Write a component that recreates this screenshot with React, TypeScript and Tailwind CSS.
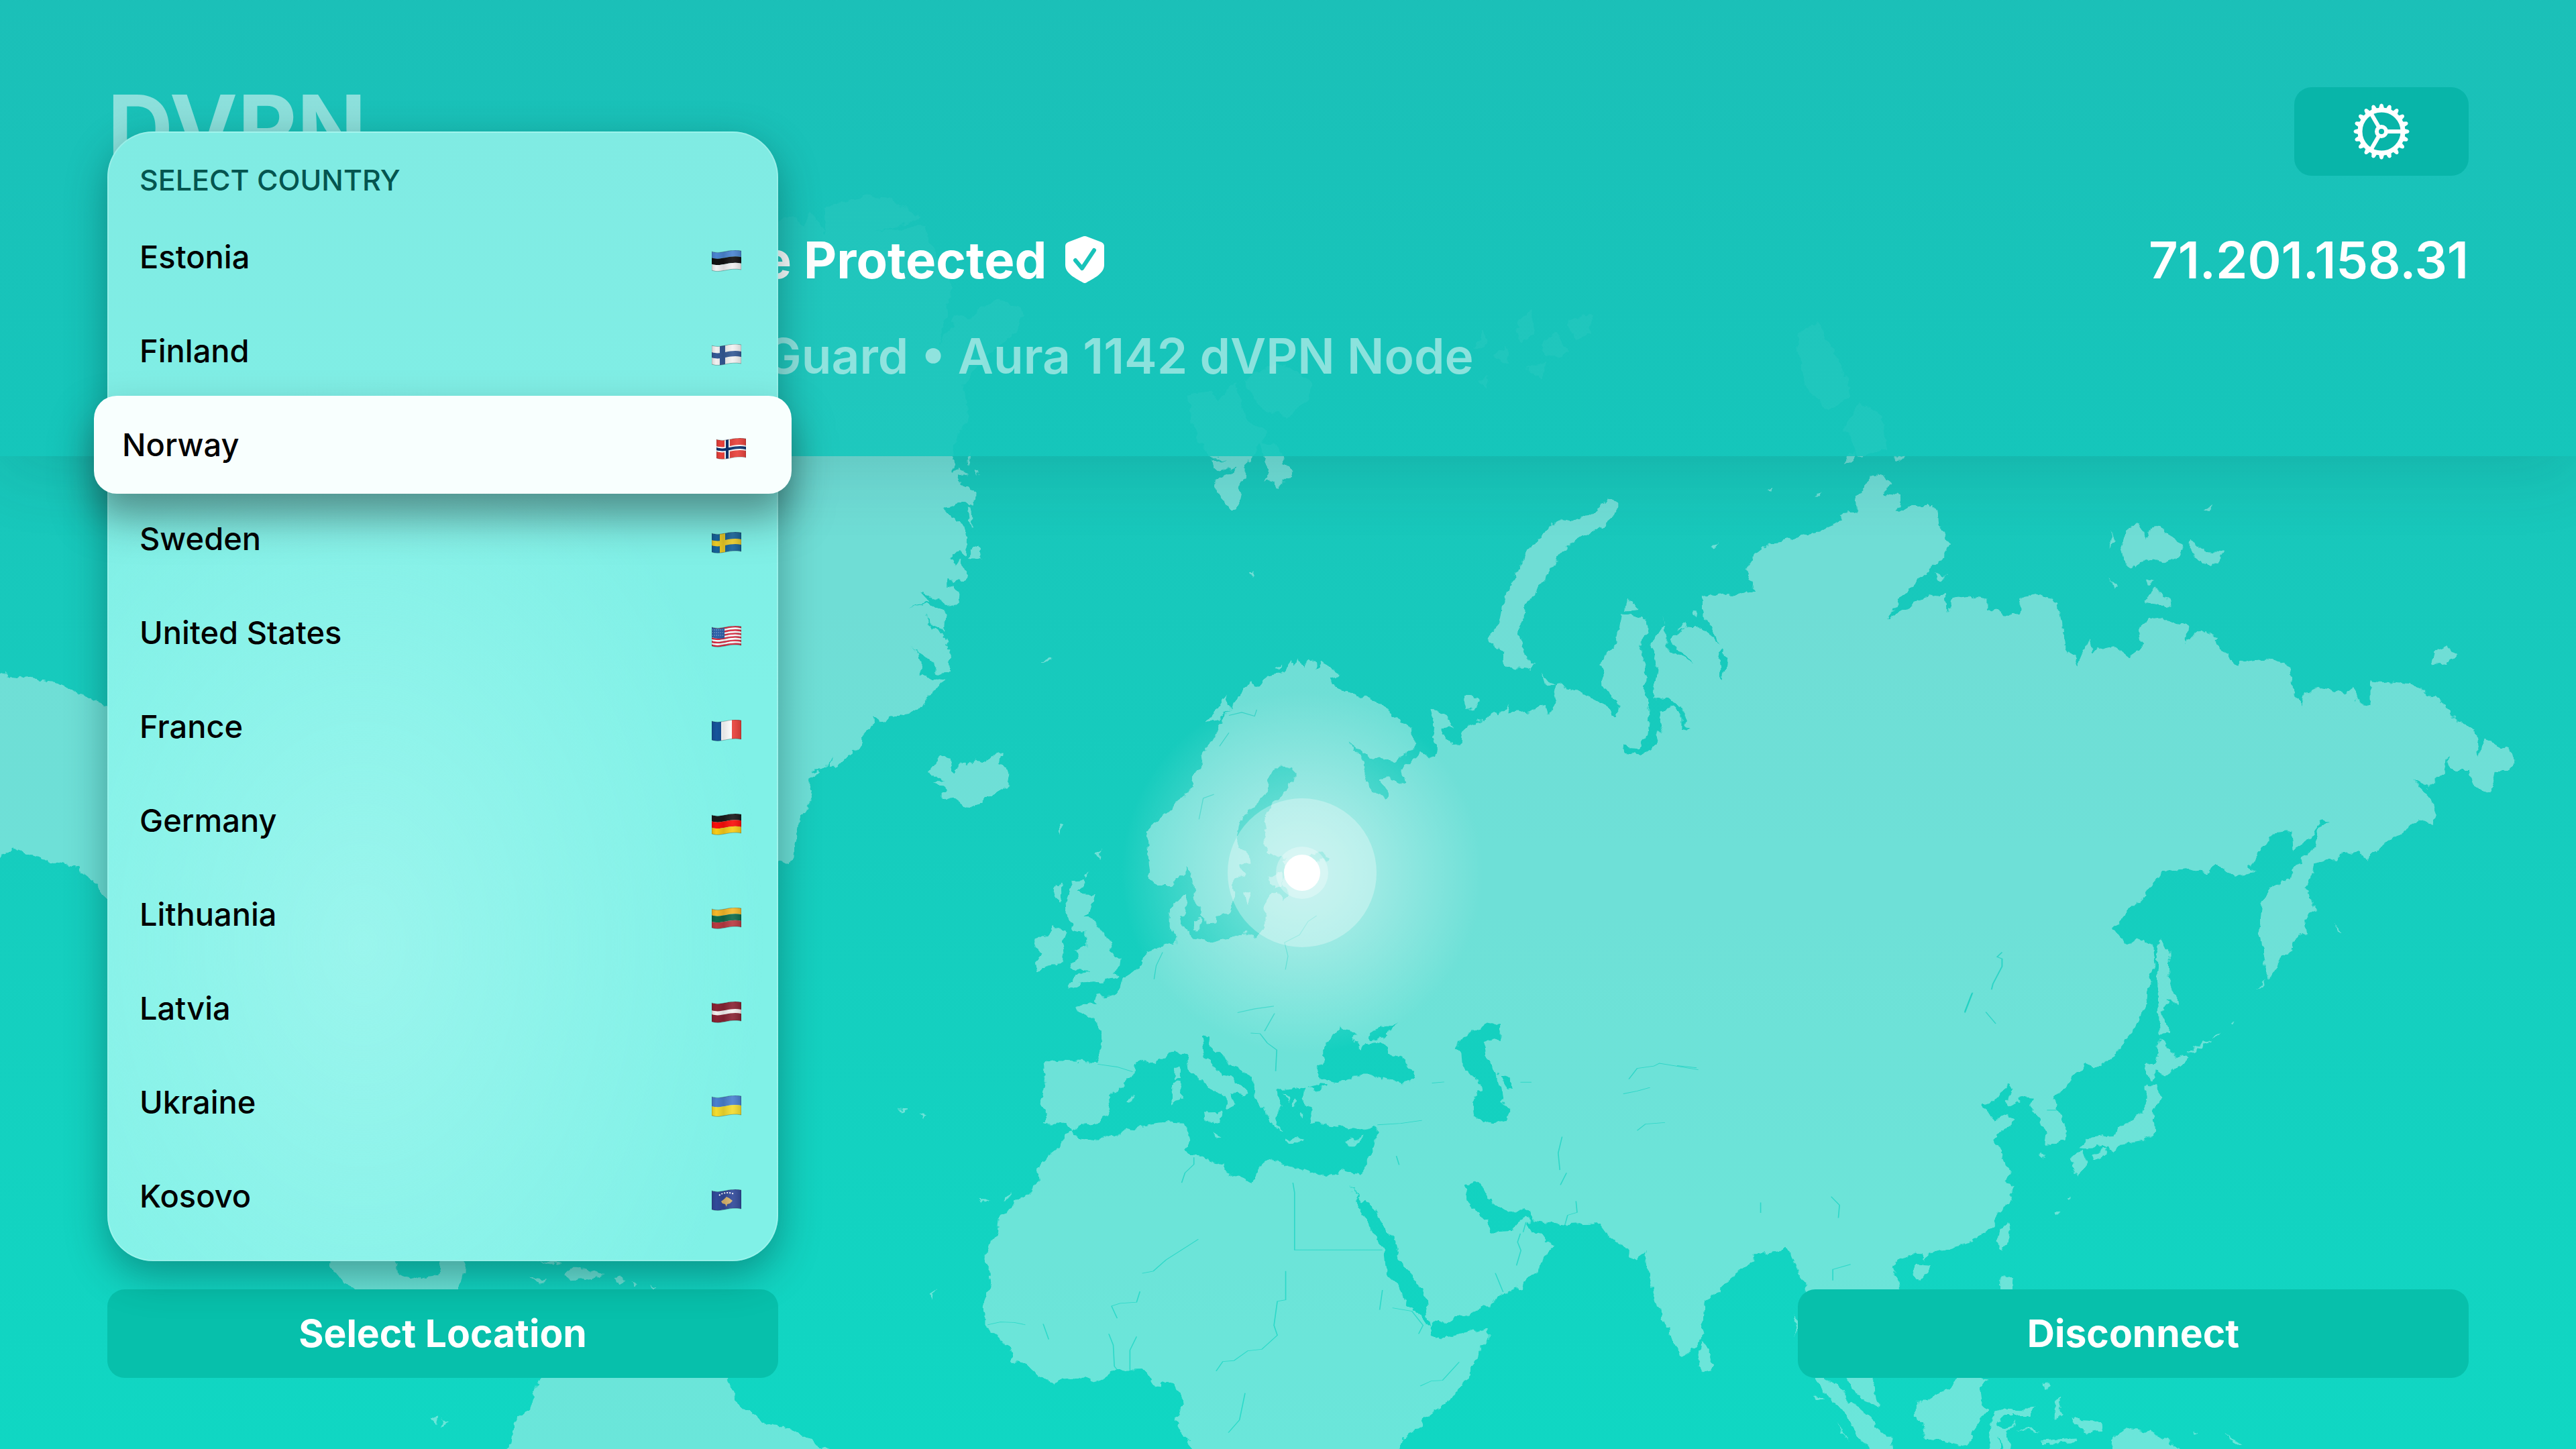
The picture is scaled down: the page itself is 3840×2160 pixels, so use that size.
import type { ReactNode } from "react";
import { clsx } from "clsx";

const band = (from: number, to: number) =>
    `M0 ${from + 2}C14 ${from + 7} 26 ${from - 3} 44 ${from + 1}V${to + 1}C26 ${to - 3} 14 ${to + 7} 0 ${to + 2}Z`;

const stripes = (colors: string[]) =>
    colors.map((fill, i) => (
        <path key={i} d={band((28 / colors.length) * i, (28 / colors.length) * (i + 1))} fill={fill} />
    ));

const cross = (field: string, outer: string, inner?: string) => (
    <>
        <path d={band(0, 28)} fill={field} />
        <path d={band(10, 18)} fill={outer} />
        <path d="M12 0h8v32h-8z" fill={outer} />
        {inner && <path d={band(12, 16)} fill={inner} />}
        {inner && <path d="M14 0h4v32h-4z" fill={inner} />}
    </>
);

const countries: { name: string; flag: ReactNode }[] = [
    { name: "Estonia", flag: stripes(["#4b86d2", "#111111", "#f1f1f1"]) },
    { name: "Finland", flag: cross("#f1f1f1", "#355a96") },
    { name: "Norway", flag: cross("#e8413b", "#ffffff", "#0d3270") },
    { name: "Sweden", flag: cross("#16639c", "#f2d027") },
    {
        name: "United States",
        flag: (
            <>
                {stripes(["#dc2840", "#fff", "#dc2840", "#fff", "#dc2840", "#fff", "#dc2840", "#fff", "#dc2840", "#fff", "#dc2840"])}
                <path d="M0 2C8 5 13 4 19 3V18C13 20 6 19 0 17Z" fill="#2f63ab" />
                <path d="M1 6h17M1 10h17M1 14h17" stroke="#c9dcf3" strokeWidth="1" strokeDasharray="1 2" />
            </>
        ),
    },
    {
        name: "France",
        flag: (
            <>
                <path d="M0 0h15v32H0z" fill="#16549c" />
                <path d="M14 0h16v32H14z" fill="#fdfdfd" />
                <path d="M30 0h14v32H30z" fill="#e8403a" />
            </>
        ),
    },
    { name: "Germany", flag: stripes(["#1a1a1a", "#fb0f0c", "#f8cb17"]) },
    { name: "Lithuania", flag: stripes(["#f5b82a", "#0f6c4c", "#b93a42"]) },
    {
        name: "Latvia",
        flag: (
            <>
                <path d={band(0, 28)} fill="#8a2334" />
                <path d={band(11, 17)} fill="#f4f0f0" />
            </>
        ),
    },
    { name: "Ukraine", flag: stripes(["#4a80cf", "#f4dc2e"]) },
    {
        name: "Kosovo",
        flag: (
            <>
                <path d={band(0, 28)} fill="#314a9a" />
                <path d="m14 18 5-4 3-3 4 2 5 4-4 4-4 1-1 4-2-4-4-1z" fill="#d9b46c" />
                <path d="M11 9c6-5 16-5 22-2" fill="none" stroke="#fff" strokeWidth="2" strokeDasharray="2 2" />
            </>
        ),
    },
];

function Flag({ id, children }: { id: string; children: ReactNode }) {
    return (
        <svg viewBox="0 0 44 32" className="w-11 h-8 mt-3" aria-hidden="true">
            <defs>
                <clipPath id={`${id}-cut`}>
                    <path d={band(0, 28)} />
                </clipPath>
                <linearGradient id={`${id}-fold`}>
                    <stop offset="0" stopColor="#000" stopOpacity="0.12" />
                    <stop offset="0.15" stopColor="#000" stopOpacity="0" />
                    <stop offset="0.4" stopColor="#000" stopOpacity="0.1" />
                    <stop offset="0.7" stopColor="#fff" stopOpacity="0.08" />
                    <stop offset="1" stopColor="#000" stopOpacity="0.14" />
                </linearGradient>
            </defs>
            <g clipPath={`url(#${id}-cut)`}>
                {children}
                <path d="M0 0h44v32H0z" fill={`url(#${id}-fold)`} />
            </g>
            <path d={band(0, 28)} fill="none" stroke="#000" strokeOpacity="0.25" />
        </svg>
    );
}

// Each sheet of the map is drawn on its own 1568-unit grid.
const sheets = {
    europe: "matrix(0.63776 0 0 0.57398 1360 900)",
    siberia: "matrix(1.04592 0 0 0.57398 2200 640)",
    africa: "matrix(0.82908 0 0 0.42092 1400 1500)",
    eastAsia: "matrix(0.82908 0 0 0.54847 2500 1300)",
    americas: "matrix(1.02041 0 0 0.80357 0 900)",
    greenland: "matrix(0.57398 0 0 0.40816 1130 660)",
    arctic: "matrix(0.79082 0 0 0.33333 1040 280)",
};

const land: [keyof typeof sheets, string][] = [
    ["europe", "M230,1568 262,1545 290,1510 295,1500 292,1480 298,1460 318,1434 345,1415 356,1385 360,1374 372,1368 350,1348 310,1347 312,1320 300,1300 306,1280 308,1265 314,1250 306,1225 302,1195 330,1182 350,1186 400,1188 430,1190 435,1180 443,1130 440,1108 425,1085 424,1075 405,1065 385,1058 380,1047 400,1038 432,1040 430,1012 440,1010 445,1020 465,1018 488,1000 492,972 515,962 530,948 543,905 582,895 615,885 615,860 600,838 600,790 620,775 642,752 642,790 630,820 640,850 655,870 680,875 710,880 760,862 775,853 800,865 823,850 825,780 835,755 848,750 870,772 882,760 880,742 862,720 870,700 862,668 880,662 850,660 830,645 822,620 828,580 822,555 835,520 860,505 878,475 893,450 893,430 880,424 848,422 828,460 835,485 805,520 765,560 757,605 762,630 785,655 788,672 765,680 780,700 752,720 748,790 738,805 708,810 705,830 685,832 665,780 652,700 641,685 638,700 600,735 575,735 555,710 552,680 545,590 570,565 605,530 630,505 655,465 672,410 690,370 705,345 722,300 740,275 760,245 775,225 790,200 800,215 830,190 870,180 885,150 895,165 903,140 912,170 925,145 938,142 942,175 955,152 990,175 992,190 970,195 1000,215 1040,240 1080,250 1120,285 1150,310 1168,325 1172,370 1155,395 1130,408 1080,398 1050,385 1018,357 1058,415 1060,460 1085,495 1105,505 1115,490 1090,455 1110,450 1145,472 1155,465 1145,435 1180,400 1190,385 1218,402 1225,375 1215,345 1222,310 1210,278 1240,283 1265,320 1240,325 1238,345 1260,370 1282,360 1285,335 1300,320 1360,285 1370,290 1395,260 1390,295 1410,300 1430,280 1450,285 1480,262 1485,290 1508,270 1500,235 1508,212 1568,228 1568,1568Z"],
    ["siberia", "M0,765 35,740 80,730 95,715 105,745 118,700 112,672 145,675 180,710 197,745 205,710 182,670 180,600 200,555 207,478 240,485 245,500 235,570 242,620 240,700 250,740 245,790 230,830 210,825 215,845 235,850 255,820 265,770 260,730 280,715 292,735 292,780 306,785 297,770 297,725 275,702 252,700 258,620 249,560 268,510 265,480 272,540 272,575 310,603 280,560 278,540 300,513 320,515 352,560 345,620 352,650 358,590 340,530 325,470 325,435 380,425 398,420 385,360 400,320 430,290 490,262 520,240 518,218 545,215 540,180 555,140 573,112 593,140 580,165 608,175 600,215 620,197 650,197 660,210 665,260 675,300 665,335 640,375 610,430 587,490 640,440 670,425 672,480 680,435 700,430 728,440 728,465 750,478 775,480 780,435 795,430 830,450 835,510 838,560 858,612 874,545 880,575 910,562 930,590 948,565 945,510 962,485 1015,512 1010,555 1035,517 1057,545 1065,580 1080,608 1130,595 1160,620 1163,665 1176,720 1180,685 1205,672 1240,685 1250,670 1262,715 1275,718 1275,652 1330,662 1365,695 1390,740 1425,785 1430,845 1438,808 1465,825 1482,860 1470,885 1455,885 1452,910 1447,940 1425,925 1415,885 1390,885 1385,850 1380,895 1358,928 1335,905 1360,960 1368,1000 1365,1025 1343,1010 1300,1070 1275,1105 1272,1120 1260,1098 1235,1105 1228,1122 1210,1118 1198,1130 1185,1190 1197,1250 1182,1275 1185,1310 1165,1320 1163,1355 1148,1370 1130,1427 1125,1390 1117,1300 1122,1230 1130,1200 1158,1165 1180,1110 1200,1080 1203,1030 1215,1020 1205,1012 1195,1055 1165,1092 1163,1045 1135,1050 1115,1100 1102,1140 1110,1150 1080,1160 1055,1130 1040,1148 1010,1140 980,1145 960,1190 930,1250 903,1300 920,1310 925,1345 940,1325 965,1345 968,1390 958,1450 955,1500 932,1568 0,1568Z"],
    ["africa", "M230,450 215,510 190,540 180,580 178,625 155,685 133,695 125,735 110,745 108,785 93,820 80,890 88,930 92,970 87,1030 75,1060 85,1090 85,1130 100,1165 125,1205 133,1255 155,1270 180,1315 207,1343 220,1320 255,1312 280,1327 325,1292 368,1290 385,1343 420,1335 432,1360 435,1410 432,1440 422,1470 435,1520 475,1610 820,1610 840,1520 858,1500 870,1465 920,1390 950,1310 965,1240 985,1185 985,1140 930,1165 900,1180 885,1160 885,1120 905,1122 950,1090 1000,1050 1005,1025 1045,995 1055,965 1075,945 1080,905 1103,850 1085,815 1065,800 1055,770 1065,755 1125,775 1190,770 1205,810 1225,840 1250,897 1270,870 1275,930 1285,1030 1300,1090 1320,1200 1340,1240 1360,1200 1370,1180 1375,1040 1400,1015 1410,985 1440,935 1465,900 1465,870 1525,850 1540,930 1562,1005 1568,1005 1568,0 1140,0 1140,400Z"],
    ["eastAsia", "M-200,0 870,0 845,55 820,95 780,155 795,165 798,200 820,200 835,180 858,215 858,260 848,300 842,370 820,430 780,505 752,533 735,525 705,560 700,590 675,610 685,650 700,690 698,730 660,748 662,710 655,660 637,650 640,612 625,610 598,635 592,625 605,590 595,580 580,600 565,625 547,630 548,645 570,672 585,660 612,675 585,705 567,732 582,750 590,790 603,815 588,840 605,855 598,890 575,930 570,955 550,985 530,1008 490,1020 450,1037 447,1060 440,1040 415,1037 390,1065 388,1095 405,1135 400,1200 235,1200 233,1110 215,1070 200,1015 185,1030 138,1040 130,1070 105,1095 75,1135 50,1160 40,1000 -200,600Z"],
    ["americas", "M-30,122 40,140 75,145 110,165 170,195 170,570 140,520 110,490 80,480 40,465 20,455 -30,490ZM470,1200 575,1200 580,1245 610,1255 640,1245 648,1200 683,1200 668,1285 530,1285 495,1250ZM787,1436 800,1420 1050,1420 1062,1436 1075,1480 1110,1515 1160,1535 1250,1600 740,1600 750,1520 775,1490Z"],
    ["greenland", "M-100,40 510,40 500,110 520,90 545,130 520,120 525,150 550,165 562,175 560,230 520,212 500,238 482,230 500,280 530,292 542,350 540,408 520,395 498,425 515,460 525,422 545,480 540,500 510,515 490,490 490,525 522,540 520,578 490,597 450,560 425,545 445,575 390,605 445,582 490,625 488,700 445,660 438,620 440,665 487,715 492,735 487,755 497,755 500,838 465,840 445,790 398,745 420,770 425,850 387,870 430,848 487,868 455,900 435,940 410,975 350,1005 318,1022 297,1000 298,1030 280,1055 260,1120 230,1155 205,1190 185,1190 190,1145 180,1190 145,1195 155,1210 130,1230 145,1265 135,1310 110,1360 105,1420 95,1490 85,1530 65,1530 -100,1500ZM1178,65 1215,60 1225,30 1285,30 1280,65 1270,70 1268,135 1255,145 1243,245 1232,248 1190,175 1183,135 1205,125 1240,90 1190,103ZM1310,30 1365,40 1362,75 1393,103 1370,130 1352,168 1345,142 1318,145 1328,100Z"],
    ["arctic", "M100,180 180,130 200,175 215,115 240,200 237,90 260,70 320,35 355,40 418,130 400,155 340,190 428,165 440,260 480,440 470,550 455,710 490,560 510,590 560,500 600,520 617,580 580,690 530,790 500,880 510,1040 490,1100 480,1250 100,1250ZM925,920 970,910 980,960 1008,875 1025,950 1035,1040 1075,1100 1040,1210 970,1210 945,1130 930,1050ZM1030,860 1090,780 1155,860 1150,950 1110,1030 1060,980ZM1060,1140 1085,1130 1105,1210 1070,1210ZM1465,720 1480,640 1485,700ZM1500,760 1520,700 1530,790ZM1540,620 1570,540 1580,640 1555,700ZM1590,700 1620,640 1640,740 1600,760ZM1560,800 1600,780 1590,860ZM1640,600 1690,560 1680,650 1655,680ZM1470,860 1490,840 1485,900ZM2070,660 2110,600 2150,760 2175,930 2130,990 2090,900ZM2160,1080 2190,960 2235,1020 2240,1170 2190,1210Z"],
];

const water: [keyof typeof sheets, string][] = [
    ["europe", "M372,1368 405,1355 440,1350 465,1310 458,1285 480,1255 518,1225 520,1190 535,1185 570,1195 600,1170 615,1160 640,1175 645,1205 680,1245 715,1270 735,1290 738,1318 755,1300 745,1268 778,1278 775,1262 740,1230 705,1205 680,1165 675,1130 695,1122 700,1150 740,1195 798,1232 800,1270 820,1310 835,1350 860,1365 850,1330 865,1310 855,1265 905,1258 920,1262 915,1290 935,1320 930,1345 990,1362 1000,1352 1050,1368 1085,1355 1080,1400 1060,1470 1045,1482 1000,1472 965,1487 860,1455 840,1443 810,1460 808,1485 793,1503 765,1490 735,1478 725,1455 650,1435 635,1415 650,1395 640,1350 600,1348 500,1365 430,1393 375,1385ZM925,1258 945,1248 968,1252 945,1262ZM1000,1100 1015,1110 1040,1115 1028,1130 1045,1158 1075,1140 1105,1150 1135,1180 1170,1205 1178,1230 1165,1245 1120,1240 1070,1222 1035,1222 1000,1243 955,1235 943,1215 960,1190 960,1150 975,1140 980,1120ZM1068,1110 1100,1100 1135,1087 1110,1115 1115,1125 1090,1135 1068,1130ZM1345,1088 1377,1095 1375,1132 1332,1140 1345,1180 1368,1215 1370,1240 1378,1290 1391,1300 1391,1345 1355,1353 1310,1330 1308,1310 1320,1268 1335,1265 1310,1230 1282,1195 1280,1165 1268,1155 1285,1130ZM1378,1228 1396,1228 1405,1255 1385,1258ZM915,652 950,645 975,665 950,668Z"],
    ["africa", "M738,632 752,680 760,695 768,685 790,740 803,800 820,830 828,900 850,950 865,1000 875,1030 883,1140 870,1100 840,1055 828,990 803,945 798,860 778,800 760,720ZM945,630 962,622 975,635 990,690 1030,735 1055,715 1070,760 1053,745 1030,795 993,800 985,760 978,755 955,700Z"],
];

const islands: [keyof typeof sheets, string][] = [
    ["europe", "M375,720 402,718 405,735 385,752 428,755 415,790 400,812 425,820 435,850 455,865 465,905 490,920 488,945 470,960 484,970 450,980 400,983 362,1000 385,965 410,955 370,945 385,915 380,900 405,890 405,850 375,845 362,825 358,780ZM330,835 360,850 350,880 357,910 350,935 320,940 290,955 282,935 305,910 286,895 288,870 315,860ZM38,435 55,410 70,393 90,405 95,440 110,430 112,408 125,420 150,405 165,410 185,392 210,395 205,415 228,435 225,465 205,490 180,500 150,528 120,525 95,505 70,512 70,490 85,480 48,465 75,455ZM613,1205 627,1198 627,1235 615,1240ZM605,1245 630,1248 628,1290 608,1300ZM677,1323 724,1322 720,1352 700,1348 680,1335ZM870,1386 918,1391 915,1399 872,1395ZM1015,1395 1055,1382 1030,1405ZM775,750 792,742 780,780ZM838,710 860,700 862,725 842,735ZM655,820 675,815 672,845 655,850ZM1292,240 1305,232 1327,250 1308,274 1293,268ZM340,572 350,575 345,600ZM432,650 445,632 438,665ZM400,705 415,692 405,712ZM340,730 350,722 345,770 332,760ZM685,315 720,265 735,240 740,275 715,300ZM500,1290 515,1275 520,1290ZM15,1325 30,1330 22,1334ZM150,1540 165,1550 158,1558ZM215,1550 230,1527 225,1548ZM705,1370 722,1382 712,1388ZM870,1270 880,1280 875,1290ZM890,1285 900,1300 888,1305ZM900,1320 912,1330 905,1340Z"],
    ["siberia", "M190,175 203,190 203,215 180,250 130,305 110,350 95,400 78,440 70,455 68,490 60,520 65,560 82,615 78,625 45,615 35,575 18,550 22,530 35,500 38,455 45,420 60,375 68,325 90,280 120,235 140,240 170,215ZM95,632 112,670 98,662ZM218,440 230,465 215,468ZM530,60 542,62 528,92ZM598,68 611,72 605,82ZM920,310 925,280 940,242 955,285 968,248 985,270 1008,295 1000,330 980,350 965,335 948,342 942,360 925,345ZM1018,292 1040,315 1065,320 1060,350 1040,348 1018,320ZM907,270 912,290 904,305ZM955,388 966,392 958,412ZM968,415 988,435 990,460 952,450ZM1360,605 1365,580 1382,563 1400,585 1385,602ZM655,370 671,378 662,400ZM480,175 493,160 488,175ZM903,390 914,410 908,412ZM1040,205 1050,195 1048,207ZM335,305 342,295 340,315ZM415,155 422,150 420,162ZM305,480 312,470 315,492ZM288,520 300,500 300,515Z"],
    ["eastAsia", "M42,1280 55,1300 65,1325 62,1355 42,1360 38,1310ZM875,175 883,210 885,290 902,360 885,345 875,390 887,435 868,440 865,350 862,215ZM868,452 890,490 920,505 905,525 885,550 860,540 850,565 842,550 845,518 862,515ZM845,575 862,575 870,610 855,650 858,710 840,730 800,740 785,765 775,745 735,750 722,748 740,720 790,712 802,685 835,655 845,615ZM745,770 772,748 768,765 748,782ZM705,770 730,757 735,785 722,825 712,815 715,785ZM915,495 945,462 960,455 930,488ZM963,450 978,435 970,450ZM995,415 1003,405 998,417ZM1043,318 1058,293 1050,315ZM1183,143 1196,165 1188,160ZM598,958 600,975 585,1032 575,1000 580,970ZM432,1068 457,1070 450,1095 438,1107 425,1095ZM582,1098 603,1102 607,1200 580,1200ZM235,1355 275,1378 300,1420 330,1460 355,1490 365,1520 385,1540 390,1600 360,1600 320,1520 290,1450 262,1410ZM300,1350 350,1365 355,1420 362,1455 345,1445 320,1415ZM505,1360 560,1378 545,1400 548,1440 560,1460 545,1490 530,1520 525,1560 490,1550 445,1540 440,1495 428,1480 428,1450 458,1425 490,1410ZM570,1470 590,1458 630,1462 642,1447 635,1475 590,1475 575,1495 585,1510 610,1495 590,1520 605,1600 590,1600 580,1530 578,1600 565,1600 562,1510ZM680,1440 688,1430 685,1455 692,1475 680,1490ZM712,1485 740,1488 762,1500 765,1520 740,1525 725,1510ZM780,1545 790,1525 812,1510 850,1525 890,1550 935,1600 790,1600ZM655,1545 715,1538 718,1550 655,1554ZM605,1514 655,1518 640,1523ZM930,1515 942,1518 932,1522ZM985,1525 1015,1560 1005,1560ZM210,1205 217,1230 209,1262ZM250,1420 262,1435 255,1438ZM290,1500 310,1545 298,1525ZM680,925 688,920 682,938ZM700,890 707,882 703,895ZM655,770 666,768 660,776ZM660,1390 668,1395 663,1405Z"],
    ["americas", "M785,1220 820,1222 810,1229ZM822,1248 840,1230 882,1243 878,1252 835,1256ZM775,1248 797,1250 790,1259ZM895,1248 912,1252 905,1262ZM920,1255 930,1262 925,1268ZM950,1262 958,1268 952,1270ZM630,1508 640,1510 636,1520ZM643,1515 655,1517 648,1522ZM1360,1280 1368,1275 1362,1290ZM1428,1105 1448,1106 1440,1112ZM1310,935 1325,936 1320,940Z"],
    ["greenland", "M545,235 555,240 557,315 548,290ZM552,385 570,380 580,425 553,422ZM565,100 577,92 570,120ZM543,20 551,60 548,85ZM1277,475 1287,475 1281,490ZM740,808 760,780 760,795ZM1335,825 1360,808 1350,830Z"],
];

// Borders and rivers that show the sea colour through the land.
const lines: [keyof typeof sheets, string][] = [
    ["africa", "M636,625 639,660V863H797M623,938V1040L608,1045 602,1130 608,1165 580,1215 555,1220 530,1255 510,1258 498,1292M466,825 408,898 385,938 365,946M87,1128 110,1118 135,1120 155,1128M187,1125 197,1180M305,1160 313,1200 315,1275 322,1292M343,1288V1218L355,1170M361,1010 355,1048 325,1052 310,1062 320,1105M458,535V560L442,590 436,625M797,1005 792,1075M815,1068 850,1080 870,1130 862,1160M1045,805 1040,835 1046,865 1038,918M1000,945 1014,1012M1120,462 1113,520 1116,580M1128,590 1117,633M1055,765 1050,800M550,1370 540,1465 520,1510M865,1345 885,1327 905,1325 935,1260M285,205 320,215 348,232M788,420 830,415 868,404M822,530 827,562M1240,258 1255,220 1285,212 1295,202 1365,225M1230,310 1255,300 1278,288M1255,440 1270,417 1305,412M1145,690 1147,730 1130,740 1125,775M1477,695V732M585,88 603,25M560,95 577,97 590,130 607,155 605,230M1045,269H1065M886,272 908,268"],
    ["europe", "M872,950 878,915 870,880 905,860 925,825 945,810M565,975 570,940 585,905M760,1062 800,1052 845,1045M718,370 740,335M670,560 680,505 705,495M740,290 770,282 800,292 805,275"],
    ["siberia", "M750,1358 743,1370 750,1375V1395L737,1440 735,1455M708,1463 697,1515"],
    ["eastAsia", "M530,330 517,380M555,380 573,412M277,882 292,905 290,940M280,1110V1080L312,1066M0,526 35,532M665,647H682"],
];

function Shapes({ list }: { list: [keyof typeof sheets, string][] }) {
    return list.map(([sheet, d]) => <path key={sheet} d={d} transform={sheets[sheet]} />);
}

function WorldMap() {
    return (
        <svg
            viewBox="0 0 3840 2160"
            preserveAspectRatio="xMidYMid slice"
            className="absolute inset-0 w-full h-full"
            aria-hidden="true"
        >
            <defs>
                <filter id="coast" filterUnits="userSpaceOnUse" x="-40" y="0" width="3920" height="2200" colorInterpolationFilters="sRGB">
                    <feTurbulence type="fractalNoise" baseFrequency="0.06" numOctaves="3" seed="4" />
                    <feDisplacementMap in="SourceGraphic" scale="15" xChannelSelector="R" yChannelSelector="G" />
                </filter>
                <mask id="land" maskUnits="userSpaceOnUse" x="0" y="0" width="3840" height="2160">
                    <g filter="url(#coast)">
                        <g fill="#fff"><Shapes list={land} /></g>
                        <g fill="#000"><Shapes list={water} /></g>
                        <g fill="#fff"><Shapes list={islands} /></g>
                    </g>
                    <g fill="none" stroke="#000" strokeWidth="2" strokeOpacity="0.7"><Shapes list={lines} /></g>
                </mask>
                <radialGradient id="glow">
                    <stop offset="0" stopColor="#fff" stopOpacity="0.5" />
                    <stop offset="0.4" stopColor="#fff" stopOpacity="0.32" />
                    <stop offset="1" stopColor="#fff" stopOpacity="0" />
                </radialGradient>
            </defs>
            <rect width="3840" height="2160" fill="#fff" fillOpacity="0.38" mask="url(#land)" />
            <circle cx="1941" cy="1301" r="270" fill="url(#glow)" />
            <circle cx="1941" cy="1301" r="111" fill="#fff" fillOpacity="0.3" />
            <circle cx="1941" cy="1301" r="39" fill="#fff" fillOpacity="0.3" />
            <circle cx="1941" cy="1301" r="27" fill="#fff" />
        </svg>
    );
}

function GearIcon() {
    return (
        <svg viewBox="-42 -42 84 84" className="w-[84px] h-[84px]" fill="none" stroke="currentColor" aria-hidden="true">
            {Array.from({ length: 20 }, (_, i) => (
                <path key={i} d="M31 -5L40 -2.5Q43 0 40 2.5L31 5Z" fill="currentColor" stroke="none" transform={`rotate(${i * 18})`} />
            ))}
            <circle r="32" strokeWidth="7" />
            <circle r="7" strokeWidth="6" />
            <path d="M9 0H30M-4.500 7.800L-15 26M-4.500 -7.800L-15 -26" strokeWidth="6" />
        </svg>
    );
}

function ShieldIcon() {
    return (
        <svg viewBox="0 0 58 70" className="w-[58px] h-[70px]" aria-hidden="true">
            <path d="M25 1Q29 -1 33 1L54 9Q58 11 58 15V43C58 56 42 63 32 69Q29 71 26 69C16 63 0 56 0 43V15Q0 11 4 9Z" fill="#fff" />
            <path d="M15 36L25 48L43 21" fill="none" stroke="#18c3b9" strokeWidth="6" strokeLinecap="round" strokeLinejoin="round" />
        </svg>
    );
}

function Header() {
    return (
        <header className="relative px-40 pt-[130px] pb-[101px] bg-linear-to-b from-[#1bc0b8]/90 to-[#15c6bb]/90 shadow-[0_20px_100px_rgba(0,60,60,0.14)]">
            <div className="flex items-start justify-between">
                <h1 className="text-[136px] leading-[122px] font-bold text-white/50">DVPN</h1>
                <button
                    type="button"
                    aria-label="Settings"
                    className="flex items-center justify-center w-[260px] h-[132px] rounded-[26px] bg-[#08b5a9] text-white"
                >
                    <GearIcon />
                </button>
            </div>
            <div className="mt-[77px] flex items-center justify-between text-[76px] leading-[96px] text-white">
                <p className="flex items-center gap-7 pl-[782px] font-bold">
                    You’re Protected
                    <ShieldIcon />
                </p>
                <p className="font-semibold">71.201.158.31</p>
            </div>
            <p className="mt-12 pl-[816px] text-[73px] leading-[96px] font-semibold text-white/50">
                WireGuard • Aura 1142 dVPN Node
            </p>
        </header>
    );
}

function CountryMenu({ selected }: { selected: string }) {
    return (
        <div className="absolute bottom-full left-0 mb-[42px] w-full pt-[42px] pb-[25px] rounded-[68px] border-2 border-white/20 bg-[radial-gradient(ellipse_60%_50%_at_38%_72%,#9af5ed_0%,#9af5ed00_100%),linear-gradient(to_bottom,#80ebe3_0%,#80f1e7_50%)] shadow-[0_20px_60px_rgba(0,50,50,0.4)]">
            <h2 className="px-[46px] pb-4 text-[43px] leading-[57px] font-medium text-[#04554f]">SELECT COUNTRY</h2>
            <ul>
                {countries.map(({ name, flag }) => (
                    <li key={name}>
                        <button
                            type="button"
                            className={clsx(
                                "flex items-center justify-between text-[47px] font-medium text-black",
                                name === selected
                                    ? "relative -mx-[22px] -my-[3px] w-[1040px] h-[146px] pl-[42px] pr-[68px] rounded-[34px] bg-[#f8fffe] shadow-[0_34px_60px_rgba(30,50,50,0.5)]"
                                    : "w-full h-[140px] pl-[46px] pr-[53px]",
                            )}
                        >
                            {name}
                            <Flag id={name.slice(0, 3)}>{flag}</Flag>
                        </button>
                    </li>
                ))}
            </ul>
        </div>
    );
}

export default function App() {
    return (
        <div className="relative flex flex-col min-h-screen overflow-hidden bg-linear-to-b from-[#1bbfb7] to-[#10d7c3] font-['Inter',sans-serif]">
            <WorldMap />
            <Header />
            <footer className="relative mt-auto flex justify-between px-40 pb-[106px]">
                <div className="relative w-[1000px]">
                    <button type="button" className="w-full h-[132px] rounded-[26px] bg-[#07c0ab] text-[57px] font-bold text-white">
                        Select Location
                    </button>
                    <CountryMenu selected="Norway" />
                </div>
                <button type="button" className="w-[1000px] h-[132px] rounded-[26px] bg-[#07c0ab] text-[57px] font-bold text-white">
                    Disconnect
                </button>
            </footer>
        </div>
    );
}
